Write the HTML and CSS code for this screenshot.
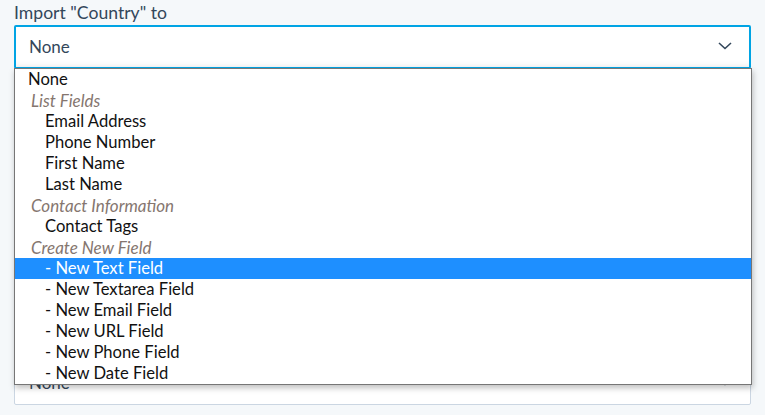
FILE: index.html
```html
<!DOCTYPE html>
<html>
<head>
<meta charset="utf-8">
<link rel="stylesheet" href="styles.css">
</head>
<body>
<div class="page">
  <div class="field">
    <div class="label">Import "Country" to</div>
    <div class="select active">
      <span class="value">None</span>
      <svg class="chev" width="14" height="8" viewBox="0 0 14 8"><path d="M1 1 L7 6.5 L13 1" fill="none" stroke="#33475b" stroke-width="1.6"/></svg>
    </div>
    <ul class="dropdown">
      <li class="opt top">None</li>
      <li class="group">List Fields</li>
      <li class="opt">Email Address</li>
      <li class="opt">Phone Number</li>
      <li class="opt">First Name</li>
      <li class="opt">Last Name</li>
      <li class="group">Contact Information</li>
      <li class="opt">Contact Tags</li>
      <li class="group">Create New Field</li>
      <li class="opt selected">- New Text Field</li>
      <li class="opt">- New Textarea Field</li>
      <li class="opt">- New Email Field</li>
      <li class="opt">- New URL Field</li>
      <li class="opt">- New Phone Field</li>
      <li class="opt">- New Date Field</li>
    </ul>
  </div>
  <div class="field second">
    <div class="select">
      <span class="value">None</span>
      <svg class="chev" width="14" height="8" viewBox="0 0 14 8"><path d="M1 1 L7 6.5 L13 1" fill="none" stroke="#33475b" stroke-width="1.6"/></svg>
    </div>
  </div>
</div>
</body>
</html>
```
FILE: styles.css
```css
html, body {
  margin: 0;
  padding: 0;
  background: #f5f8fa;
  font-family: Lato, "Open Sans", sans-serif;
  color: #33475b;
}
.page {
  padding: 3px 14px 0 14px;
  width: 737px;
}
.field {
  position: relative;
}
.label {
  font-size: 17.6px;
  line-height: 20px;
  height: 22px;
}
.select {
  box-sizing: border-box;
  height: 44px;
  background: #fff;
  border: 1px solid #cbd6e2;
  border-radius: 2px;
  display: flex;
  align-items: center;
  justify-content: space-between;
  padding: 0 18px 2px 14px;
  font-size: 17px;
}
.select.active {
  border: 2px solid #00a4e4;
  padding-left: 13px;
  padding-right: 17px;
  box-shadow: inset 0 -6px 6px -4px rgba(0,0,0,0.06);
}
.value {
  color: #33475b;
}
.dropdown {
  position: absolute;
  top: 65px;
  left: 0;
  width: 738px;
  box-sizing: border-box;
  margin: 0;
  padding: 0;
  list-style: none;
  background: #fff;
  border: 1px solid #767676;
  box-shadow: 1px 3px 6px rgba(0,0,0,0.25);
  z-index: 5;
}
.dropdown li {
  height: 21px;
  line-height: 21px;
  font-size: 16.6px;
  white-space: nowrap;
}
.opt {
  color: #111;
  padding-left: 30px;
}
.opt.top {
  padding-left: 13px;
}
.group {
  color: #85766f;
  font-style: italic;
  padding-left: 16px;
  font-size: 17px !important;
}
.opt.selected {
  background: #1e8fff;
  color: #fff;
}
.second {
  margin-top: 292px;
}
```
